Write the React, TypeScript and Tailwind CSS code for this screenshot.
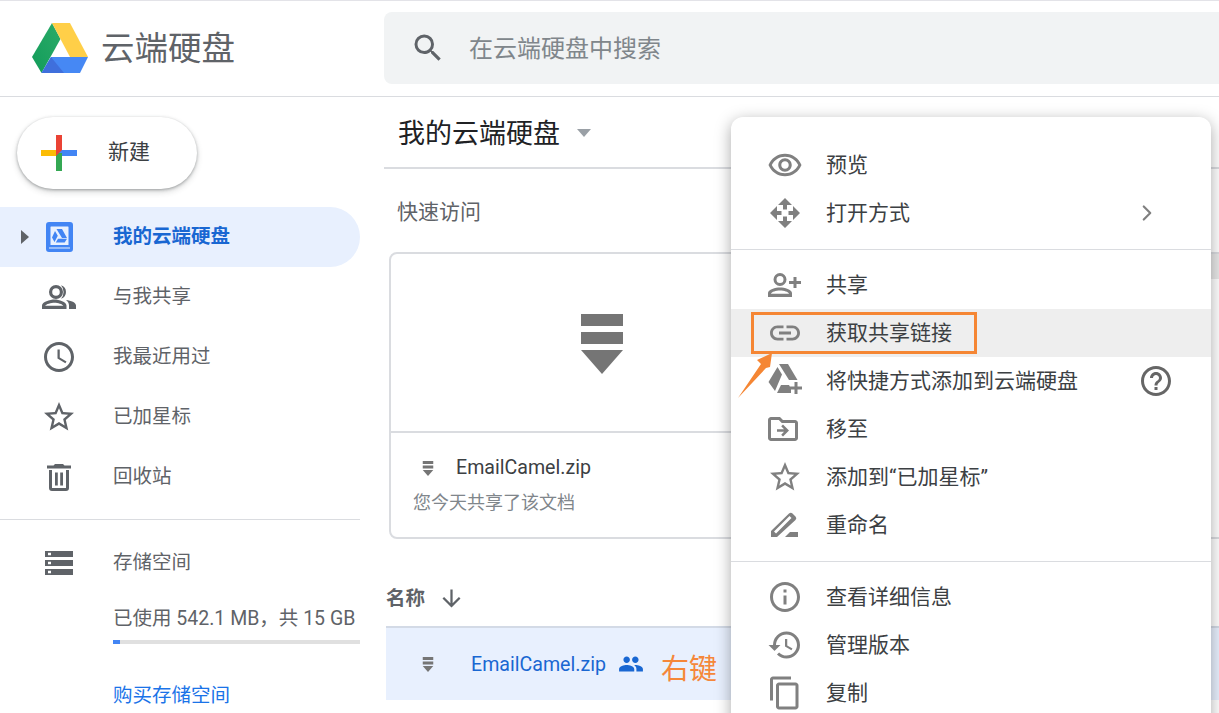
import { ChevronRight } from "lucide-react";
import type { ReactNode } from "react";

const cjk = "font-['Roboto','Noto_Sans_CJK_SC',sans-serif]";

function Icon({ d, className, box = "0 0 24 24" }: { d: string; className: string; box?: string }) {
    return (
        <svg viewBox={box} className={className} fill="currentColor">
            <path d={d} />
        </svg>
    );
}

const paths = {
    search: "M15.5 14h-.79l-.28-.27A6.471 6.471 0 0 0 16 9.5 6.5 6.5 0 1 0 9.5 16c1.61 0 3.09-.59 4.23-1.57l.27.28v.79l5 4.99L20.49 19l-4.99-5zm-6 0C7.01 14 5 11.99 5 9.5S7.01 5 9.5 5 14 7.01 14 9.5 11.99 14 9.5 14z",
    clock: "M11.99 2C6.47 2 2 6.48 2 12s4.47 10 9.99 10C17.52 22 22 17.52 22 12S17.52 2 11.99 2zM12 20c-4.42 0-8-3.58-8-8s3.58-8 8-8 8 3.58 8 8-3.58 8-8 8zm.5-13H11v6l5.25 3.15.75-1.23-4.5-2.67z",
    star: "M22 9.24l-7.19-.62L12 2 9.19 8.63 2 9.24l5.46 4.73L5.82 21 12 17.27 18.18 21l-1.63-7.03L22 9.24zM12 15.4l-3.76 2.27 1-4.28-3.32-2.88 4.38-.38L12 6.1l1.71 4.04 4.38.38-3.32 2.88 1 4.28L12 15.4z",
    eye: "M12 6.5c3.79 0 7.17 2.13 8.82 5.5-1.65 3.37-5.03 5.5-8.82 5.5S4.83 15.37 3.18 12C4.83 8.63 8.21 6.5 12 6.5m0-2C7 4.5 2.73 7.61 1 12c1.73 4.39 6 7.5 11 7.5s9.27-3.11 11-7.5c-1.73-4.39-6-7.5-11-7.5zm0 5c1.38 0 2.5 1.12 2.5 2.5s-1.12 2.5-2.5 2.5-2.5-1.12-2.5-2.5 1.12-2.5 2.5-2.5m0-2c-2.48 0-4.5 2.02-4.5 4.5s2.02 4.5 4.5 4.5 4.5-2.02 4.5-4.5-2.02-4.5-4.5-4.5z",
    link: "M3.9 12c0-1.71 1.39-3.1 3.1-3.1h4V7H7c-2.76 0-5 2.24-5 5s2.24 5 5 5h4v-1.9H7c-1.71 0-3.1-1.39-3.1-3.1zM8 13h8v-2H8v2zm9-6h-4v1.9h4c1.71 0 3.1 1.39 3.1 3.1s-1.39 3.1-3.1 3.1h-4V17h4c2.76 0 5-2.24 5-5s-2.24-5-5-5z",
    help: "M11 18h2v-2h-2v2zm1-16C6.48 2 2 6.48 2 12s4.48 10 10 10 10-4.48 10-10S17.52 2 12 2zm0 18c-4.41 0-8-3.59-8-8s3.59-8 8-8 8 3.59 8 8-3.59 8-8 8zm0-14c-2.21 0-4 1.79-4 4h2c0-1.1.9-2 2-2s2 .9 2 2c0 2-3 1.75-3 5h2c0-2.25 3-2.5 3-5 0-2.21-1.79-4-4-4z",
    folderMove: "M20 6h-8l-2-2H4c-1.1 0-2 .9-2 2v12c0 1.1.9 2 2 2h16c1.1 0 2-.9 2-2V8c0-1.1-.9-2-2-2zm0 12H4V6h5.17l2 2H20v10zm-8-1l4-4-4-4-1.2 1.2 1.9 1.95H8v1.7h4.7l-1.9 1.95L12 17z",
    info: "M11 7h2v2h-2zm0 4h2v6h-2zm1-9C6.48 2 2 6.48 2 12s4.48 10 10 10 10-4.48 10-10S17.52 2 12 2zm0 18c-4.41 0-8-3.59-8-8s3.59-8 8-8 8 3.59 8 8-3.59 8-8 8z",
    history: "M13 3a9 9 0 0 0-9 9H1l3.89 3.89.07.14L9 12H6c0-3.87 3.13-7 7-7s7 3.13 7 7-3.13 7-7 7c-1.93 0-3.68-.79-4.94-2.06l-1.42 1.42A8.954 8.954 0 0 0 13 21a9 9 0 0 0 0-18zm-1 5v5l4.28 2.54.72-1.21-3.5-2.08V8H12z",
    copy: "M16 1H4c-1.1 0-2 .9-2 2v14h2V3h12V1zm3 4H8c-1.1 0-2 .9-2 2v14c0 1.1.9 2 2 2h11c1.1 0 2-.9 2-2V7c0-1.1-.9-2-2-2zm0 16H8V7h11v14z",
    arrowDown: "M20 12l-1.41-1.41L13 16.17V4h-2v12.17l-5.58-5.59L4 12l8 8 8-8z",
    sharedFill: "M16 11c1.66 0 2.99-1.34 2.99-3S17.66 5 16 5c-1.66 0-3 1.34-3 3s1.34 3 3 3zm-8 0c1.66 0 2.99-1.34 2.99-3S9.66 5 8 5C6.34 5 5 6.34 5 8s1.34 3 3 3zm0 2c-2.33 0-7 1.17-7 3.5V19h14v-2.5c0-2.33-4.67-3.5-7-3.5zm8 0c-.29 0-.62.02-.97.05 1.16.84 1.97 1.97 1.97 3.45V19h6v-2.5c0-2.33-4.67-3.5-7-3.5z",
};

function DriveLogo() {
    return (
        <svg viewBox="0 0 58 50" className="h-[50px] w-[58px] shrink-0">
            <defs>
                <linearGradient id="driveGreen" x1="0" y1="1" x2="1" y2="0">
                    <stop offset="0" stopColor="#129c5a" />
                    <stop offset="1" stopColor="#2bab68" />
                </linearGradient>
            </defs>
            <path d="M21 0 1 34l9.5 16L29.5 16z" fill="url(#driveGreen)" />
            <path d="M21 0h18l18 34H39z" fill="#ffcf48" />
            <path d="M20 34h37l-8 16H10.5z" fill="#4688f4" />
            <path d="M20 34 10.5 50H33z" fill="#3f6fdc" />
        </svg>
    );
}

function ColorPlus() {
    return (
        <svg viewBox="0 0 36 36" className="h-9 w-9 shrink-0">
            <rect x="15" y="0" width="6" height="18" fill="#ea4335" />
            <rect x="18" y="15" width="18" height="6" fill="#4285f4" />
            <rect x="15" y="18" width="6" height="18" fill="#34a853" />
            <rect x="0" y="15" width="15" height="6" fill="#fbbc05" />
            <path d="M15 21 21 15H18L15 18z" fill="#ea4335" />
        </svg>
    );
}

function MyDriveIcon() {
    return (
        <svg viewBox="0 0 27 30" className="h-[30px] w-[27px]">
            <path fillRule="evenodd" fill="#4285f4" d="M3 0h21a3 3 0 0 1 3 3v24a3 3 0 0 1-3 3H3a3 3 0 0 1-3-3V3a3 3 0 0 1 3-3zm2 4.5a.5.5 0 0 0-.5.5v18h18V5a.5.5 0 0 0-.5-.5zM3 25.5v1h21v-1z" />
            <path fill="#4285f4" d="M10.5 7h5.500l5 9h-5zM9 9l2.800 4.800L8.500 20 6 15.500zM12 16.800h9L18.700 20.500H9.800z" />
        </svg>
    );
}

function PeopleIcon() {
    return (
        <svg viewBox="0 0 34 24" className="h-6 w-[34px] text-[#5f6368]" fill="currentColor">
            <path fillRule="evenodd" d="M14 0a7 7 0 1 1 0 14 7 7 0 0 1 0-14zm0 3.200a3.800 3.800 0 1 0 0 7.600 3.800 3.800 0 0 0 0-7.600zM0 24v-3.500C0 17 8 14.500 12.500 14.500S24.500 17 24.500 20.500V24zM3.200 20.800h18.100c-.5-1.700-5.600-3.100-8.800-3.100s-8.800 1.400-9.300 3.100z" />
            <path d="M19 .3a7 7 0 0 1 0 13.400 10 10 0 0 0 0-13.400zM24 15c5 .5 10 2.500 10 5.500V24h-7v-3.500c0-2-1-4-3-5.500z" />
        </svg>
    );
}

function TrashIcon() {
    return (
        <svg viewBox="0 0 24 27" className="h-[27px] w-6 text-[#5f6368]" fill="currentColor">
            <path fillRule="evenodd" d="M8 0h8l1.500 1.500H24v3H0v-3h6.500zM2 6h20v18a3 3 0 0 1-3 3H5a3 3 0 0 1-3-3zm3 0v18h14V6z" />
            <path d="M8 8.500h2.800v13H8zM13.200 8.500H16v13h-2.800z" />
        </svg>
    );
}

function StorageIcon() {
    return (
        <svg viewBox="0 0 28 24" className="h-6 w-7 text-[#5f6368]" fill="currentColor">
            <path fillRule="evenodd" d="M0 0h28v6H0zm3 1.800v2.400h3V1.800zM0 9h28v6H0zm3 1.800v2.400h3v-2.400zM0 18h28v6H0zm3 1.800v2.400h3v-2.400z" />
        </svg>
    );
}

function ZipIcon({ className }: { className: string }) {
    return (
        <svg viewBox="0 0 42 60" className={className} fill="currentColor">
            <rect x="0" y="0" width="42" height="12" />
            <rect x="0" y="18" width="42" height="12" />
            <path d="M0 36h42L21 60z" />
        </svg>
    );
}

function MoveIcon() {
    return (
        <svg viewBox="0 0 36 36" className="h-9 w-9" fill="currentColor">
            <path d="M18 3l7 7h-5v4.500h-4V10h-5z" />
            <path d="M18 33l7-7h-5v-4.500h-4V26h-5z" />
            <path d="M3 18l7-7v5h4.500v4H10v5z" />
            <path d="M33 18l-7-7v5h-4.500v4H26v5z" />
        </svg>
    );
}

function DriveAdd() {
    return (
        <svg viewBox="0 0 36 36" className="h-9 w-9" fill="currentColor">
            <path d="M12 1h9l9.500 16H22zM10.500 4 15 11.500 8 28 1.500 19zM14 22h8l2 3.500V30H10z" />
            <path d="M27.500 19h3v4.500H35v3h-4.500V31h-3v-4.500H23v-3h4.500z" />
        </svg>
    );
}

function ShareIcon() {
    return (
        <svg viewBox="0 0 36 36" className="h-9 w-9" fill="currentColor">
            <path fillRule="evenodd" d="M13 6a6.500 6.500 0 1 1 0 13 6.500 6.500 0 0 1 0-13zm0 3a3.500 3.500 0 1 0 0 7 3.500 3.500 0 0 0 0-7zM13 20.500c4.500 0 12 2 12 5.500v4H1v-4c0-3.500 7.500-5.500 12-5.500zm0 3c-4 0-8.500 1.300-9 3.300h18c-.5-2-5-3.300-9-3.300z" />
            <path d="M26.500 10h3v4h4.500v3h-4.500v4h-3v-4H22v-3h4.500z" />
        </svg>
    );
}

function RenameIcon() {
    return (
        <svg viewBox="0 0 36 36" className="h-9 w-9" fill="currentColor">
            <path fillRule="evenodd" d="M4 30v-6L22 6.500a2.500 2.500 0 0 1 3.500 0l3 3a2.500 2.500 0 0 1 0 3.500L10 30zm3-5.500 2 2L24.500 11l-2-2z" />
            <path d="M23 25h8v5H18z" />
        </svg>
    );
}

function NavRow({ icon, label }: { icon: ReactNode; label: string }) {
    return (
        <div className="flex h-[60px] items-center">
            <div className="flex w-[113px] shrink-0 justify-center pl-[5px]">{icon}</div>
            <span className="text-[19.5px] text-[#5f6368]">{label}</span>
        </div>
    );
}

function MenuRow({ icon, label, right, active }: { icon: ReactNode; label: string; right?: ReactNode; active?: boolean }) {
    return (
        <div className={`flex h-12 items-center ${active ? "bg-[#eeeeee]" : ""}`}>
            <div className="flex w-[95px] shrink-0 justify-end pr-[23px] text-[#808080]">{icon}</div>
            <span className="flex-1 pt-[2px] text-[21px] text-[#3c4043]">{label}</span>
            {right}
        </div>
    );
}

const menuIcon = "h-9 w-9";

function ContextMenu() {
    return (
        <div className="absolute left-[731px] top-[117px] h-[620px] w-[480px] rounded-xl bg-white py-6 shadow-[0_4px_16px_rgba(0,0,0,0.34)]">
            <MenuRow icon={<Icon d={paths.eye} className={menuIcon} />} label="预览" />
            <MenuRow
                icon={<MoveIcon />}
                label="打开方式"
                right={<ChevronRight className="mr-[51px] h-[26px] w-[26px] text-[#808080]" strokeWidth={2} />}
            />
            <div className="mb-[11px] mt-3 h-px bg-[#dadce0]" />
            <MenuRow icon={<ShareIcon />} label="共享" />
            <MenuRow icon={<Icon d={paths.link} className={menuIcon} />} label="获取共享链接" active />
            <MenuRow
                icon={<DriveAdd />}
                label="将快捷方式添加到云端硬盘"
                right={<Icon d={paths.help} className="mr-[37px] h-9 w-9 text-[#666666]" />}
            />
            <MenuRow icon={<Icon d={paths.folderMove} className={`${menuIcon} -translate-x-0.5`} />} label="移至" />
            <MenuRow icon={<Icon d={paths.star} className={menuIcon} />} label="添加到“已加星标”" />
            <MenuRow icon={<RenameIcon />} label="重命名" />
            <div className="mb-[11px] mt-3 h-px bg-[#dadce0]" />
            <MenuRow icon={<Icon d={paths.info} className={menuIcon} />} label="查看详细信息" />
            <MenuRow icon={<Icon d={paths.history} className={menuIcon} />} label="管理版本" />
            <MenuRow icon={<Icon d={paths.copy} className={menuIcon} />} label="复制" />
        </div>
    );
}

export default function App() {
    return (
        <div className={`relative h-[713px] w-[1219px] overflow-hidden bg-white ${cjk}`}>
            {/* Header */}
            <header className="flex h-[97px] items-center border-y border-[#dadce0] border-t-[#e3e3e8] pb-px">
                <div className="flex w-[384px] shrink-0 items-center gap-3 pl-[31px]">
                    <DriveLogo />
                    <span className="pt-[2px] text-[33.5px] leading-none text-[#5f6368]">云端硬盘</span>
                </div>
                <div className="flex h-[72px] flex-1 items-center rounded-l-lg bg-[#f1f3f4] pl-[26px]">
                    <Icon d={paths.search} className="h-9 w-9 text-[#5f6368]" />
                    <span className="ml-[23px] pt-[2px] text-2xl text-[#80868b]">在云端硬盘中搜索</span>
                </div>
            </header>

            <div className="flex">
                {/* Sidebar */}
                <aside className="w-[384px] shrink-0 pr-6">
                    <div className="pl-[17px] pt-5">
                        <div className="flex h-[72px] w-[180px] items-center rounded-full bg-white pl-6 shadow-[0_1px_3px_rgba(60,64,67,0.4),0_3px_6px_rgba(60,64,67,0.2)]">
                            <ColorPlus />
                            <span className="ml-[31px] text-[21px] text-[#3c4043]">新建</span>
                        </div>
                    </div>
                    <div className="mt-[18px] flex h-[60px] items-center rounded-r-full bg-[#e8f0fe]">
                        <div className="ml-[21px] h-0 w-0 border-y-[7px] border-l-[8px] border-y-transparent border-l-[#5f6368]" />
                        <div className="ml-[17px]">
                            <MyDriveIcon />
                        </div>
                        <span className="ml-[40px] text-[19.5px] font-bold text-[#1967d2]">我的云端硬盘</span>
                    </div>
                    <NavRow icon={<PeopleIcon />} label="与我共享" />
                    <NavRow icon={<Icon d={paths.clock} className="h-9 w-9 text-[#5f6368]" />} label="我最近用过" />
                    <NavRow icon={<Icon d={paths.star} className="h-9 w-9 text-[#5f6368]" />} label="已加星标" />
                    <NavRow icon={<TrashIcon />} label="回收站" />
                    <div className="mt-3 h-px bg-[#dadce0]" />
                    <div className="mt-[13px]">
                        <NavRow icon={<StorageIcon />} label="存储空间" />
                    </div>
                    <div className="pl-[113px]">
                        <div className="mt-3 whitespace-nowrap text-[19.5px] leading-[28px] text-[#5f6368]">已使用 542.1 MB，共 15 GB</div>
                        <div className="mt-[7px] h-1 bg-[#e0e0e0]">
                            <div className="h-1 w-[7px] bg-[#4285f4]" />
                        </div>
                        <div className="mt-[38px] text-[19.5px] leading-[28px] text-[#1a73e8]">购买存储空间</div>
                    </div>
                </aside>

                {/* Main content */}
                <main className="min-w-0 flex-1">
                    <div className="flex h-[72px] items-center border-b-2 border-[#dadce0] pl-[14px]">
                        <span className="pt-1 text-[27px] text-[#202124]">我的云端硬盘</span>
                        <div className="ml-[17px] mt-[2px] h-0 w-0 border-x-[7.5px] border-t-[8px] border-x-transparent border-t-[#9aa0a6]" />
                    </div>
                    <div className="pl-[13px] pt-[27px] text-[21px] leading-[32px] text-[#5f6368]">快速访问</div>
                    <div className="ml-[5px] mt-6 flex w-[1000px] gap-6">
                        <div className="h-[287px] w-[600px] rounded-lg border-2 border-[#dadce0]">
                            <div className="h-[179px] border-b-2 border-[#dadce0] pl-[190px] pt-[60px]">
                                <ZipIcon className="h-[60px] w-[42px] text-[#757575]" />
                            </div>
                            <div className="flex items-center pl-[31px] pt-[21px]">
                                <ZipIcon className="h-[15px] w-3 text-[#757575]" />
                                <span className="ml-[22px] text-[19.6px] leading-[28px] text-[#3c4043]">EmailCamel.zip</span>
                            </div>
                            <div className="pl-[22px] pt-[9px] text-lg leading-[24px] text-[#80868b]">您今天共享了该文档</div>
                        </div>
                        {/* second card, only its edge shows beside the menu */}
                        <div className="h-[287px] flex-1 rounded-lg border-2 border-[#dadce0]">
                            <div className="h-[25px] bg-[#e8e8e8]" />
                        </div>
                    </div>
                    <div className="ml-[2px] mt-[38px] flex h-[42px] items-center">
                        <span className="pt-[2px] text-[19.5px] font-bold text-[#5f6368]">名称</span>
                        <Icon d={paths.arrowDown} className="ml-[13px] h-[27px] w-[27px] text-[#5f6368]" />
                    </div>
                    <div className="ml-[2px] mt-[7px] flex h-[74px] items-center border-t-2 border-[#d3dae6] bg-[#e8f0fe]">
                        <ZipIcon className="ml-9 h-[15px] w-3 text-[#757575]" />
                        <span className="ml-[37px] pt-[2px] text-[19.6px] text-[#1967d2]">EmailCamel.zip</span>
                        <Icon d={paths.sharedFill} className="ml-3 h-[26px] w-[26px] text-[#1967d2]" />
                    </div>
                </main>
            </div>

            <ContextMenu />

            {/* Annotations */}
            <span className="absolute left-[661px] top-[650px] text-[28px] leading-[40px] text-[#f5873a]">右键</span>
            <div className="absolute left-[751px] top-[312px] h-[42px] w-[226px] border-[3px] border-[#f58634]" />
            <svg viewBox="0 0 36 46" className="absolute left-[738px] top-[353px] h-[46px] w-[36px]">
                <path d="M34 0 19 7l4 4L0 45 28 15l4-1z" fill="#f58634" />
            </svg>
        </div>
    );
}
